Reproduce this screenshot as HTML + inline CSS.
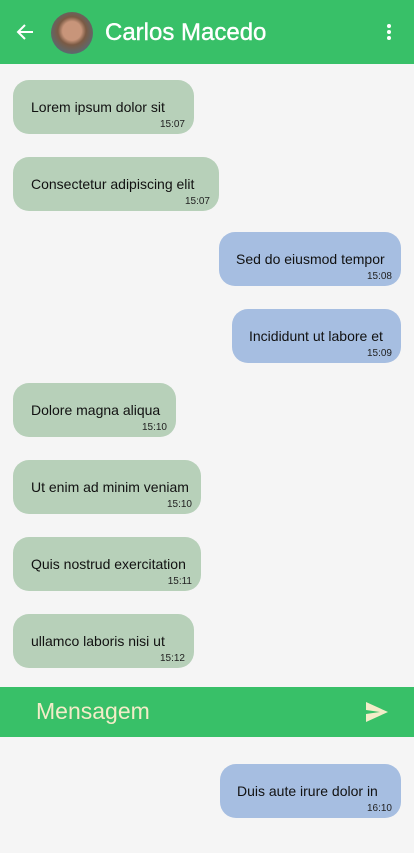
<!DOCTYPE html>
<html><head><meta charset="utf-8"><style>
body{margin:0;width:414px;height:853px;background:#f5f5f5;font-family:"Liberation Sans",Roboto,sans-serif;position:relative;overflow:hidden}
.hdr{position:absolute;left:0;top:0;width:414px;height:64px;background:#38c068}
.b{position:absolute;height:54px;border-radius:16px;box-sizing:border-box}
.l{background:#b7d0b9;left:13px}
.r{background:#a6bee1;right:13px}
.t{position:absolute;left:18px;top:19px;font-size:14px;color:#111;white-space:nowrap}
.r .t{left:17px}
.tm{position:absolute;right:9px;top:39px;font-size:10px;color:#222}
</style></head><body>
<div class="hdr">
<svg style="position:absolute;left:15px;top:22px" width="20" height="20" viewBox="0 0 20 20"><path d="M18 10H3M10 3L3 10L10 17" stroke="#fff" stroke-width="2" fill="none"/></svg>
<div style="position:absolute;left:51px;top:12px;width:42px;height:42px;border-radius:50%;background:radial-gradient(circle at 50% 45%,#c8957a 0 30%,#7a5a44 45%,#5a6a72 75%);overflow:hidden"></div>
<div style="position:absolute;left:105px;top:19px;font-size:24px;color:#fff;font-weight:500;-webkit-text-stroke:0.4px #fff">Carlos Macedo</div>
<svg style="position:absolute;left:385px;top:23px" width="8" height="18"><circle cx="4" cy="3" r="2" fill="#fff"/><circle cx="4" cy="9" r="2" fill="#fff"/><circle cx="4" cy="15" r="2" fill="#fff"/></svg>
</div>
<div class="b l" style="top:80px;width:181px"><span class="t">Lorem ipsum dolor sit</span><span class="tm">15:07</span></div>
<div class="b l" style="top:157px;width:206px"><span class="t">Consectetur adipiscing elit</span><span class="tm">15:07</span></div>
<div class="b r" style="top:232px;width:182px"><span class="t">Sed do eiusmod tempor</span><span class="tm">15:08</span></div>
<div class="b r" style="top:309px;width:169px"><span class="t">Incididunt ut labore et</span><span class="tm">15:09</span></div>
<div class="b l" style="top:383px;width:163px"><span class="t">Dolore magna aliqua</span><span class="tm">15:10</span></div>
<div class="b l" style="top:460px;width:188px"><span class="t">Ut enim ad minim veniam</span><span class="tm">15:10</span></div>
<div class="b l" style="top:537px;width:188px"><span class="t">Quis nostrud exercitation</span><span class="tm">15:11</span></div>
<div class="b l" style="top:614px;width:181px"><span class="t">ullamco laboris nisi ut</span><span class="tm">15:12</span></div>
<div style="position:absolute;left:0;top:687px;width:414px;height:50px;background:#38c068">
<div style="position:absolute;left:36px;top:11px;font-size:23px;color:#f3ecc8">Mensagem</div>
<svg style="position:absolute;left:366px;top:15px" width="22" height="20" viewBox="0 0 22 20"><path d="M0 0L22 10L0 20L0 12L14 10L0 8Z" fill="#f3ecc8"/></svg>
</div>
<div class="b r" style="top:764px;width:181px"><span class="t">Duis aute irure dolor in</span><span class="tm">16:10</span></div>
</body></html>
